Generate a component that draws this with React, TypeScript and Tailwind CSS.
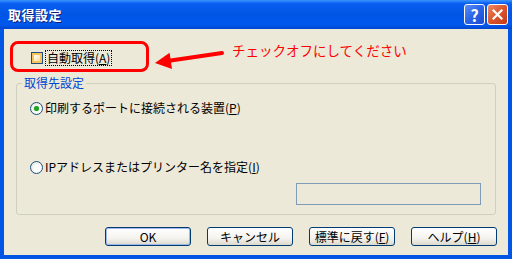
import React from "react"

const font = { fontFamily: '"Noto Sans CJK JP", "Liberation Sans", sans-serif' }

function Radio({ checked }: { checked?: boolean }) {
  return (
    <span className="w-[13px] h-[13px] rounded-full border border-[#1C5180] bg-[radial-gradient(circle_at_60%_60%,#ffffff_30%,#dcdcd5_100%)] flex items-center justify-center shrink-0">
      {checked && <span className="w-[5px] h-[5px] rounded-full bg-[#21A121] shadow-[0_0_1px_#5ad35a]" />}
    </span>
  )
}

function XpButton({ children, isDefault }: { children: React.ReactNode; isDefault?: boolean }) {
  return (
    <button
      className={
        "w-[86px] h-[19px] rounded-[3px] border border-[#003C74] bg-[linear-gradient(180deg,#ffffff_0%,#f4f3ee_60%,#dcd8cc_100%)] text-[12px] leading-[14px] text-black flex items-center justify-center " +
        (isDefault ? "shadow-[inset_0_0_0_1px_#9DB9EB]" : "")
      }
    >
      {children}
    </button>
  )
}

export default function App() {
  return (
    <div className="relative w-[512px] h-[259px] bg-[#0055E5] flex flex-col overflow-hidden" style={font}>
      {/* title bar */}
      <div className="h-[29px] flex items-center justify-between pl-[8px] pr-[4px] bg-[linear-gradient(180deg,#3D95FF_0%,#0A5FF0_12%,#0055E5_50%,#0058EE_85%,#0046D0_100%)]">
        <span className="text-white font-bold text-[13px] tracking-[0.5px] [text-shadow:1px_1px_0_#0A1E7A]">取得設定</span>
        <div className="flex gap-[2px] items-center">
          <div className="w-[21px] h-[21px] rounded-[3px] border border-white bg-[linear-gradient(135deg,#5B8FF6_0%,#2A63E8_50%,#1B4BD3_100%)] flex items-center justify-center text-white font-bold text-[16px] leading-none">
            ?
          </div>
          <div className="w-[21px] h-[21px] rounded-[3px] border border-white bg-[linear-gradient(135deg,#ED8A62_0%,#DC552C_50%,#C43A1A_100%)] flex items-center justify-center">
            <svg width="11" height="11" viewBox="0 0 11 11">
              <path d="M1.5 1.5 L9.5 9.5 M9.5 1.5 L1.5 9.5" stroke="#fff" strokeWidth="2.2" strokeLinecap="square" />
            </svg>
          </div>
        </div>
      </div>

      {/* body */}
      <div className="flex-1 mx-[4px] mb-[4px] bg-[#ECE9D8] flex flex-col text-[12px] leading-[14px] text-black">
        <div className="flex items-center mt-[22px] ml-[27px] h-[14px]">
          <span className="w-[12px] h-[12px] border border-[#1C5180] bg-[linear-gradient(135deg,#fff_20%,#FFD37A_100%)] shadow-[inset_0_0_0_2px_#F9C35B] shrink-0" />
          <span className="ml-[2px] border border-dotted border-black px-[1px]">
            自動取得(<span className="underline">A</span>)
          </span>
        </div>

        <fieldset className="mt-[11px] mx-[12px] h-[139px] border border-[#D0D0BF] rounded-[3px] pl-[13px] pr-[14px] flex flex-col">
          <legend className="-ml-[8px] px-[2px] text-[#0046D5]">取得先設定</legend>
          <div className="flex items-center gap-[2px] mt-[11px]">
            <Radio checked />
            <span>印刷するポートに接続される装置(<span className="underline">P</span>)</span>
          </div>
          <div className="flex items-center gap-[2px] mt-[45px]">
            <Radio />
            <span>IPアドレスまたはプリンター名を指定(<span className="underline">I</span>)</span>
          </div>
          <div className="flex justify-end mt-[9px]">
            <div className="w-[185px] h-[22px] border border-[#7F9DB9] bg-[#ECE9D8]" />
          </div>
        </fieldset>

        <div className="flex justify-end gap-[16px] mt-[12px] mr-[11px]">
          <XpButton isDefault>OK</XpButton>
          <XpButton>キャンセル</XpButton>
          <XpButton>
            標準に戻す(<span className="underline">F</span>)
          </XpButton>
          <XpButton>
            ヘルプ(<span className="underline">H</span>)
          </XpButton>
        </div>
      </div>

      {/* annotation overlay */}
      <div className="absolute left-[10px] top-[41px] w-[139px] h-[31px] border-[3px] border-[#FF0000] rounded-[8px]" />
      <svg className="absolute left-[150px] top-[44px]" width="80" height="32" viewBox="0 0 80 32">
        <path d="M72 9 L20.8 16.6" stroke="#FF0000" strokeWidth="4" strokeLinecap="round" />
        <path d="M5 19 L22 25 L19.6 8.7 Z" fill="#FF0000" />
      </svg>
      <span className="absolute left-[232px] top-[41px] text-[13.5px] leading-[18px] text-[#FF0000]">チェックオフにしてください</span>
    </div>
  )
}
